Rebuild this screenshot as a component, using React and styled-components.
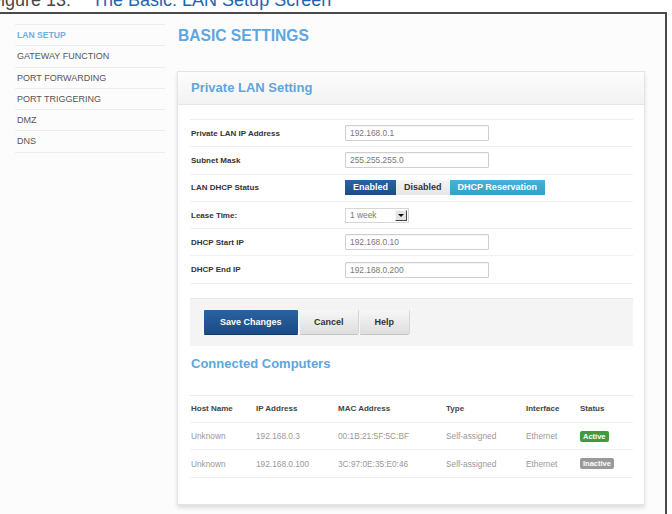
import React from 'react'
import styled, { createGlobalStyle } from 'styled-components'

const GlobalStyle = createGlobalStyle`
  html, body {
    margin: 0;
    padding: 0;
    background: #ffffff;
    overflow: hidden;
  }
  body {
    font-family: "Liberation Sans", Arial, sans-serif;
  }
`

const Page = styled.div`
  width: 672px;
  height: 514px;
  overflow: hidden;
`

const Caption = styled.div`
  margin: -9px 0 3px -10px;
  height: 18px;
  line-height: 18px;
  font-size: 18px;
  white-space: nowrap;
  color: #474747;
`

const CaptionTitle = styled.span`
  margin-left: 21px;
  color: #2563ad;
`

const Frame = styled.div`
  box-sizing: border-box;
  width: 667px;
  height: 520px;
  border-top: 2px solid #4a4a4a;
  border-right: 2px solid #4a4a4a;
  background: #fcfcfc;
  display: flex;
  padding: 10px 0 0 15px;
`

const Sidebar = styled.nav`
  width: 150px;
  flex-shrink: 0;
  border-top: 1px solid #ececec;
  align-self: flex-start;
`

const NavItem = styled.div`
  height: 20.3px;
  line-height: 20.3px;
  border-bottom: 1px solid #ececec;
  padding-left: 2px;
  font-size: ${p => (p.active ? '8.6px' : '9px')};
  font-weight: ${p => (p.active ? 'bold' : 'normal')};
  color: ${p => (p.active ? '#6fb0e2' : '#555555')};
`

const Main = styled.main`
  margin-left: 13px;
  width: 468px;
`

const PageTitle = styled.h1`
  margin: 4px 0 27px 0;
  height: 16px;
  line-height: 16px;
  font-size: 15.6px;
  font-weight: bold;
  color: #5ea6de;
`

const Card = styled.section`
  margin-left: -1px;
  width: 468px;
  box-sizing: border-box;
  background: #ffffff;
  border: 1px solid #e4e4e4;
  box-shadow: 0 3px 4px rgba(0, 0, 0, 0.12);
  padding-bottom: 26px;
`

const CardHeader = styled.div`
  height: 32px;
  line-height: 32px;
  padding-left: 13px;
  font-size: 13px;
  font-weight: bold;
  color: #5ea6de;
  background: linear-gradient(#fdfdfd, #f2f2f2);
  border-bottom: 1px solid #e6e6e6;
`

const CardBody = styled.div`
  padding: 14px 11px 0 12px;
`

const Rows = styled.div`
  border-top: 1px solid #ececec;
`

const Row = styled.div`
  display: flex;
  align-items: center;
  height: 26.3px;
  border-bottom: 1px solid #f0f0f0;
  padding-left: 1px;
`

const Label = styled.div`
  width: 154px;
  font-size: 8px;
  font-weight: bold;
  color: #333333;
`

const TextField = styled.input`
  box-sizing: border-box;
  width: 144px;
  height: 16px;
  margin: 0;
  padding: 0 4px;
  border: 1px solid #cfcfcf;
  border-radius: 1px;
  box-shadow: inset 0 1px 1px rgba(0, 0, 0, 0.05);
  font-family: "Liberation Sans", Arial, sans-serif;
  font-size: 8.4px;
  color: #777777;
  background: #ffffff;
  outline: none;
`

const Segmented = styled.div`
  display: flex;
  height: 15px;
`

const Segment = styled.div`
  padding: 0 8px;
  line-height: 15px;
  font-size: 9px;
  font-weight: bold;
  color: ${p => (p.tone === 'plain' ? '#333333' : '#ffffff')};
  background: ${p =>
    p.tone === 'primary'
      ? 'linear-gradient(#2b62a0, #1b4c88)'
      : p.tone === 'info'
      ? 'linear-gradient(#46b2d8, #36a0c8)'
      : 'linear-gradient(#f4f4f4, #e6e6e6)'};
`

const SelectBox = styled.div`
  box-sizing: border-box;
  width: 64px;
  height: 15px;
  display: flex;
  align-items: center;
  justify-content: space-between;
  padding: 0 1px 0 4px;
  border: 1px solid #d6d6d6;
  background: #ffffff;
  font-size: 8.4px;
  color: #777777;
`

const SelectArrow = styled.span`
  box-sizing: border-box;
  width: 12px;
  height: 11px;
  display: flex;
  align-items: center;
  justify-content: center;
  background: #e4e4e4;
  border: 1px solid #f8f8f8;
  border-right-color: #444444;
  border-bottom-color: #444444;

  &::after {
    content: '';
    border-left: 3px solid transparent;
    border-right: 3px solid transparent;
    border-top: 3px solid #111111;
  }
`

const ActionBar = styled.div`
  margin-top: 14px;
  height: 48px;
  box-sizing: border-box;
  background: #f4f4f4;
  border-top: 1px solid #e8e8e8;
  display: flex;
  align-items: center;
  gap: 2px;
  padding-left: 14px;
`

const Button = styled.button`
  height: 24px;
  margin: 0;
  padding: 0 ${p => (p.primary ? '16px' : '14.5px')};
  border: none;
  border-radius: 1px;
  font-family: "Liberation Sans", Arial, sans-serif;
  font-size: 9px;
  font-weight: bold;
  color: ${p => (p.primary ? '#ffffff' : '#333333')};
  background: ${p =>
    p.primary ? 'linear-gradient(#2a62a1, #1a4b87)' : 'linear-gradient(#f7f7f7, #dedede)'};
  box-shadow: ${p =>
    p.primary ? '0 1px 0 #12396a' : '0 1px 0 #c4c4c4, 1px 0 0 #d6d6d6'};
`

const SectionTitle = styled.h2`
  margin: 10px 0 23px 1px;
  height: 16px;
  line-height: 16px;
  font-size: 13px;
  font-weight: bold;
  color: #5ea6de;
`

const Table = styled.div`
  border-top: 1px solid #ececec;
`

const TableRow = styled.div`
  display: grid;
  grid-template-columns: 65px 82px 108px 80px 54px 1fr;
  align-items: center;
  height: 26.3px;
  padding-left: 1px;
  border-bottom: 1px solid #f0f0f0;
  font-size: ${p => (p.head ? '8px' : '8.3px')};
  font-weight: ${p => (p.head ? 'bold' : 'normal')};
  color: ${p => (p.head ? '#444444' : '#999999')};
`

const Badge = styled.span`
  justify-self: start;
  height: 11px;
  line-height: 11px;
  padding: 0 3px;
  border-radius: 2px;
  font-size: 7.5px;
  font-weight: bold;
  color: #ffffff;
  background: ${p => (p.active ? '#3f9a42' : '#9a9a9a')};
`

const navItems = ['LAN SETUP', 'GATEWAY FUNCTION', 'PORT FORWARDING', 'PORT TRIGGERING', 'DMZ', 'DNS']

const computers = [
  { host: 'Unknown', ip: '192.168.0.3', mac: '00:1B:21:5F:5C:BF', type: 'Self-assigned', iface: 'Ethernet', active: true },
  { host: 'Unknown', ip: '192.168.0.100', mac: '3C:97:0E:35:E0:46', type: 'Self-assigned', iface: 'Ethernet', active: false },
]

export default function App() {
  return (
    <Page>
      <GlobalStyle />
      <Caption>
        Figure 13:<CaptionTitle>The Basic: LAN Setup Screen</CaptionTitle>
      </Caption>
      <Frame>
        <Sidebar>
          {navItems.map((item, i) => (
            <NavItem key={item} active={i === 0}>{item}</NavItem>
          ))}
        </Sidebar>
        <Main>
          <PageTitle>BASIC SETTINGS</PageTitle>
          <Card>
            <CardHeader>Private LAN Setting</CardHeader>
            <CardBody>
              <Rows>
                <Row>
                  <Label>Private LAN IP Address</Label>
                  <TextField readOnly value="192.168.0.1" />
                </Row>
                <Row>
                  <Label>Subnet Mask</Label>
                  <TextField readOnly value="255.255.255.0" />
                </Row>
                <Row>
                  <Label>LAN DHCP Status</Label>
                  <Segmented>
                    <Segment tone="primary">Enabled</Segment>
                    <Segment tone="plain">Disabled</Segment>
                    <Segment tone="info">DHCP Reservation</Segment>
                  </Segmented>
                </Row>
                <Row>
                  <Label>Lease Time:</Label>
                  <SelectBox>
                    1 week
                    <SelectArrow />
                  </SelectBox>
                </Row>
                <Row>
                  <Label>DHCP Start IP</Label>
                  <TextField readOnly value="192.168.0.10" />
                </Row>
                <Row>
                  <Label>DHCP End IP</Label>
                  <TextField readOnly value="192.168.0.200" />
                </Row>
              </Rows>

              <ActionBar>
                <Button primary>Save Changes</Button>
                <Button>Cancel</Button>
                <Button>Help</Button>
              </ActionBar>

              <SectionTitle>Connected Computers</SectionTitle>
              <Table>
                <TableRow head>
                  <span>Host Name</span>
                  <span>IP Address</span>
                  <span>MAC Address</span>
                  <span>Type</span>
                  <span>Interface</span>
                  <span>Status</span>
                </TableRow>
                {computers.map(c => (
                  <TableRow key={c.mac}>
                    <span>{c.host}</span>
                    <span>{c.ip}</span>
                    <span>{c.mac}</span>
                    <span>{c.type}</span>
                    <span>{c.iface}</span>
                    <Badge active={c.active}>{c.active ? 'Active' : 'Inactive'}</Badge>
                  </TableRow>
                ))}
              </Table>
            </CardBody>
          </Card>
        </Main>
      </Frame>
    </Page>
  )
}
